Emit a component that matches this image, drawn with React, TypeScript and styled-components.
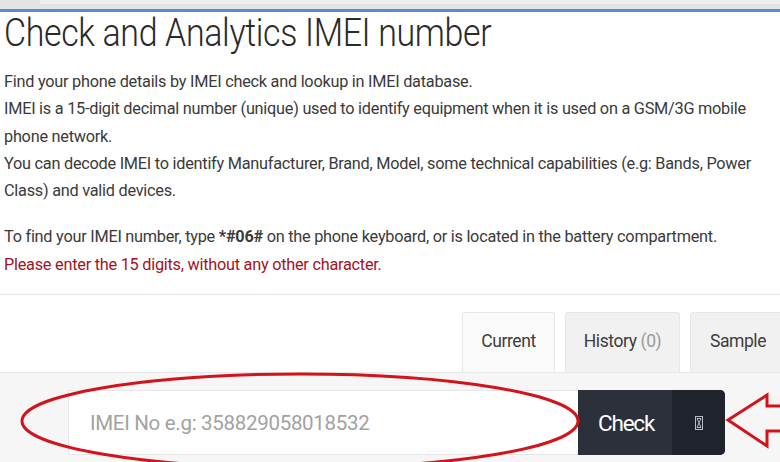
import React from "react";
import styled, { createGlobalStyle } from "styled-components";

const GlobalStyle = createGlobalStyle`
  html, body {
    margin: 0;
    padding: 0;
    background: #ffffff;
    overflow: hidden;
  }
  body {
    width: 780px;
    height: 462px;
    font-family: Roboto, "Liberation Sans", sans-serif;
  }
`;

const Page = styled.div`
  position: relative;
  width: 780px;
  height: 462px;
  overflow: hidden;
`;

const BrowserStrip = styled.div`
  height: 9px;
  background: #e4e4e4;
  display: flex;
  padding-left: 40px;
  border-bottom: 3px solid #5a8ad2;

  span {
    flex: 1;
    height: 4px;
    background: #efefef;
  }
`;

const Intro = styled.div`
  padding: 0 4px;
`;

const Title = styled.h1`
  margin: 0 0 14px;
  font-size: 39px;
  font-weight: 300;
  color: #2a2a2a;
  letter-spacing: -0.4px;
  line-height: 42px;
  white-space: nowrap;
  transform: scaleX(0.87);
  transform-origin: left center;
`;

const Text = styled.p<{ $tone?: "error" }>`
  margin: 0;
  font-size: 16.3px;
  line-height: 27.3px;
  letter-spacing: -0.25px;
  color: ${(p) => (p.$tone === "error" ? "#a3131d" : "#3a3a3a")};

  & + & {
    margin-top: 19px;
  }
`;

const Divider = styled.hr`
  margin: 16px 0 0;
  border: 0;
  border-top: 1px solid #e6e6e6;
`;

const TabsRow = styled.div`
  display: flex;
  align-items: flex-end;
  gap: 10px;
  padding: 17px 0 0 462px;
  white-space: nowrap;
`;

const Tab = styled.div<{ $active?: boolean; $width: number }>`
  flex: none;
  width: ${(p) => p.$width}px;
  height: 60px;
  box-sizing: border-box;
  display: flex;
  align-items: center;
  justify-content: center;
  padding-bottom: 4px;
  font-size: 17.5px;
  letter-spacing: -0.4px;
  color: #3d3d3d;
  background: ${(p) => (p.$active ? "#fafafa" : "#f1f1f1")};
  border: 1px solid #e6e6e6;
  border-bottom: 0;
  border-radius: 3px 3px 0 0;

  small {
    font-size: inherit;
    color: #9a9a9a;
    margin-left: 4px;
  }
`;

const Panel = styled.div`
  background: #f6f6f6;
  border-top: 1px solid #e8e8e8;
  padding: 17px 0 0 68px;
  height: 120px;
`;

const InputGroup = styled.div`
  display: flex;
  height: 65px;
`;

const ImeiInput = styled.input`
  width: 510px;
  box-sizing: border-box;
  border: 1px solid #e6e6e6;
  border-right: 0;
  background: #ffffff;
  padding: 0 0 0 21px;
  font-family: Roboto, "Liberation Sans", sans-serif;
  font-size: 20.5px;
  letter-spacing: -0.3px;
  outline: none;

  &::placeholder {
    color: #a2a2a2;
  }
`;

const CheckButton = styled.button`
  display: flex;
  align-items: stretch;
  padding: 0;
  border: 0;
  border-radius: 0 5px 5px 0;
  overflow: hidden;
  background: #2b303b;
  color: #ffffff;
  font-family: Roboto, "Liberation Sans", sans-serif;
  cursor: pointer;
`;

const ButtonLabel = styled.span`
  display: flex;
  align-items: center;
  padding: 0 0 0 20px;
  width: 94px;
  box-sizing: border-box;
  font-size: 22.5px;
  letter-spacing: -1.2px;
`;

const ButtonIcon = styled.span`
  display: flex;
  align-items: center;
  justify-content: center;
  width: 53px;
  background: #1f232c;
`;

const Overlay = styled.svg`
  position: absolute;
  left: 0;
  top: 0;
  pointer-events: none;
`;

export default function App() {
  return (
    <>
      <GlobalStyle />
      <Page>
        <BrowserStrip>
          <span />
        </BrowserStrip>
        <Intro>
          <Title>Check and Analytics IMEI number</Title>
          <Text>
            Find your phone details by IMEI check and lookup in IMEI database.
            <br />
            IMEI is a 15-digit decimal number (unique) used to identify equipment
            when it is used on a GSM/3G mobile phone network.
            <br />
            You can decode IMEI to identify Manufacturer, Brand, Model, some
            technical capabilities (e.g: Bands, Power Class) and valid devices.
          </Text>
          <Text>
            To find your IMEI number, type <b>*#06#</b> on the phone keyboard, or
            is located in the battery compartment.
          </Text>
          <Text $tone="error" style={{ marginTop: 0 }}>
            Please enter the 15 digits, without any other character.
          </Text>
        </Intro>
        <Divider />
        <TabsRow>
          <Tab $active $width={93}>
            Current
          </Tab>
          <Tab $width={115}>
            History<small>(0)</small>
          </Tab>
          <Tab $width={96}>Sample</Tab>
        </TabsRow>
        <Panel>
          <InputGroup>
            <ImeiInput placeholder="IMEI No e.g: 358829058018532" />
            <CheckButton>
              <ButtonLabel>Check</ButtonLabel>
              <ButtonIcon>
                <svg width="8" height="14" viewBox="0 0 8 14">
                  <rect x="0.5" y="0.5" width="7" height="13" fill="none" stroke="#b9bcc4" strokeWidth="1" />
                  <path d="M2 2.5h4L2 11.5h4z" fill="none" stroke="#b9bcc4" strokeWidth="1" />
                </svg>
              </ButtonIcon>
            </CheckButton>
          </InputGroup>
        </Panel>
        <Overlay width="780" height="462" viewBox="0 0 780 462">
          <ellipse cx="300" cy="421" rx="278" ry="47" fill="none" stroke="#d3121c" strokeWidth="3" />
          <path
            d="M782 406 H767 V395 L728 420 L767 446 V431 H782"
            fill="none"
            stroke="#d3121c"
            strokeWidth="3"
            strokeLinejoin="miter"
          />
        </Overlay>
      </Page>
    </>
  );
}
